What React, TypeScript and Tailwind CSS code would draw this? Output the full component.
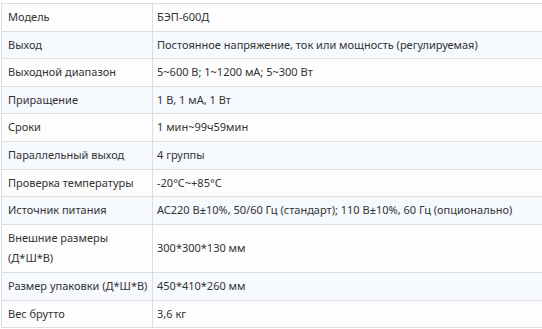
import React from "react";

const rows: [string, string][] = [
  ["Модель", "БЭП-600Д"],
  ["Выход", "Постоянное напряжение, ток или мощность (регулируемая)"],
  ["Выходной диапазон", "5~600 В; 1~1200 мА; 5~300 Вт"],
  ["Приращение", "1 В, 1 мА, 1 Вт"],
  ["Сроки", "1 мин~99ч59мин"],
  ["Параллельный выход", "4 группы"],
  ["Проверка температуры", "-20°C~+85°C"],
  ["Источник питания", "AC220 В±10%, 50/60 Гц (стандарт); 110 В±10%, 60 Гц (опционально)"],
  ["Внешние размеры (Д*Ш*В)", "300*300*130 мм"],
  ["Размер упаковки (Д*Ш*В)", "450*410*260 мм"],
  ["Вес брутто", "3,6 кг"],
];

export default function App() {
  return (
    <div className="w-[542px] h-[329px] overflow-hidden bg-white pt-[3px] pl-[1px]">
      <table
        className="w-[545px] table-fixed border-collapse text-[11px] leading-[20.6px] text-[#333]"
        style={{ fontFamily: '"Noto Sans", "Open Sans", sans-serif' }}
      >
        <colgroup>
          <col className="w-[151px]" />
          <col />
        </colgroup>
        <tbody>
          {rows.map(([k, v], i) => (
            <tr key={k} className={i % 2 === 0 ? "bg-[#fdfdfd]" : "bg-[#f6f9fe]"}>
              <td className="border border-[#dddddd] pl-[6px] pr-[2px] py-[3px] align-middle">
                {k === "Внешние размеры (Д*Ш*В)" ? (
                  <>
                    Внешние размеры
                    <br />
                    (Д*Ш*В)
                  </>
                ) : (
                  k
                )}
              </td>
              <td className="border border-[#dddddd] pl-[4px] pr-[4px] py-[3px] align-middle whitespace-nowrap">
                {v}
              </td>
            </tr>
          ))}
        </tbody>
      </table>
    </div>
  );
}
